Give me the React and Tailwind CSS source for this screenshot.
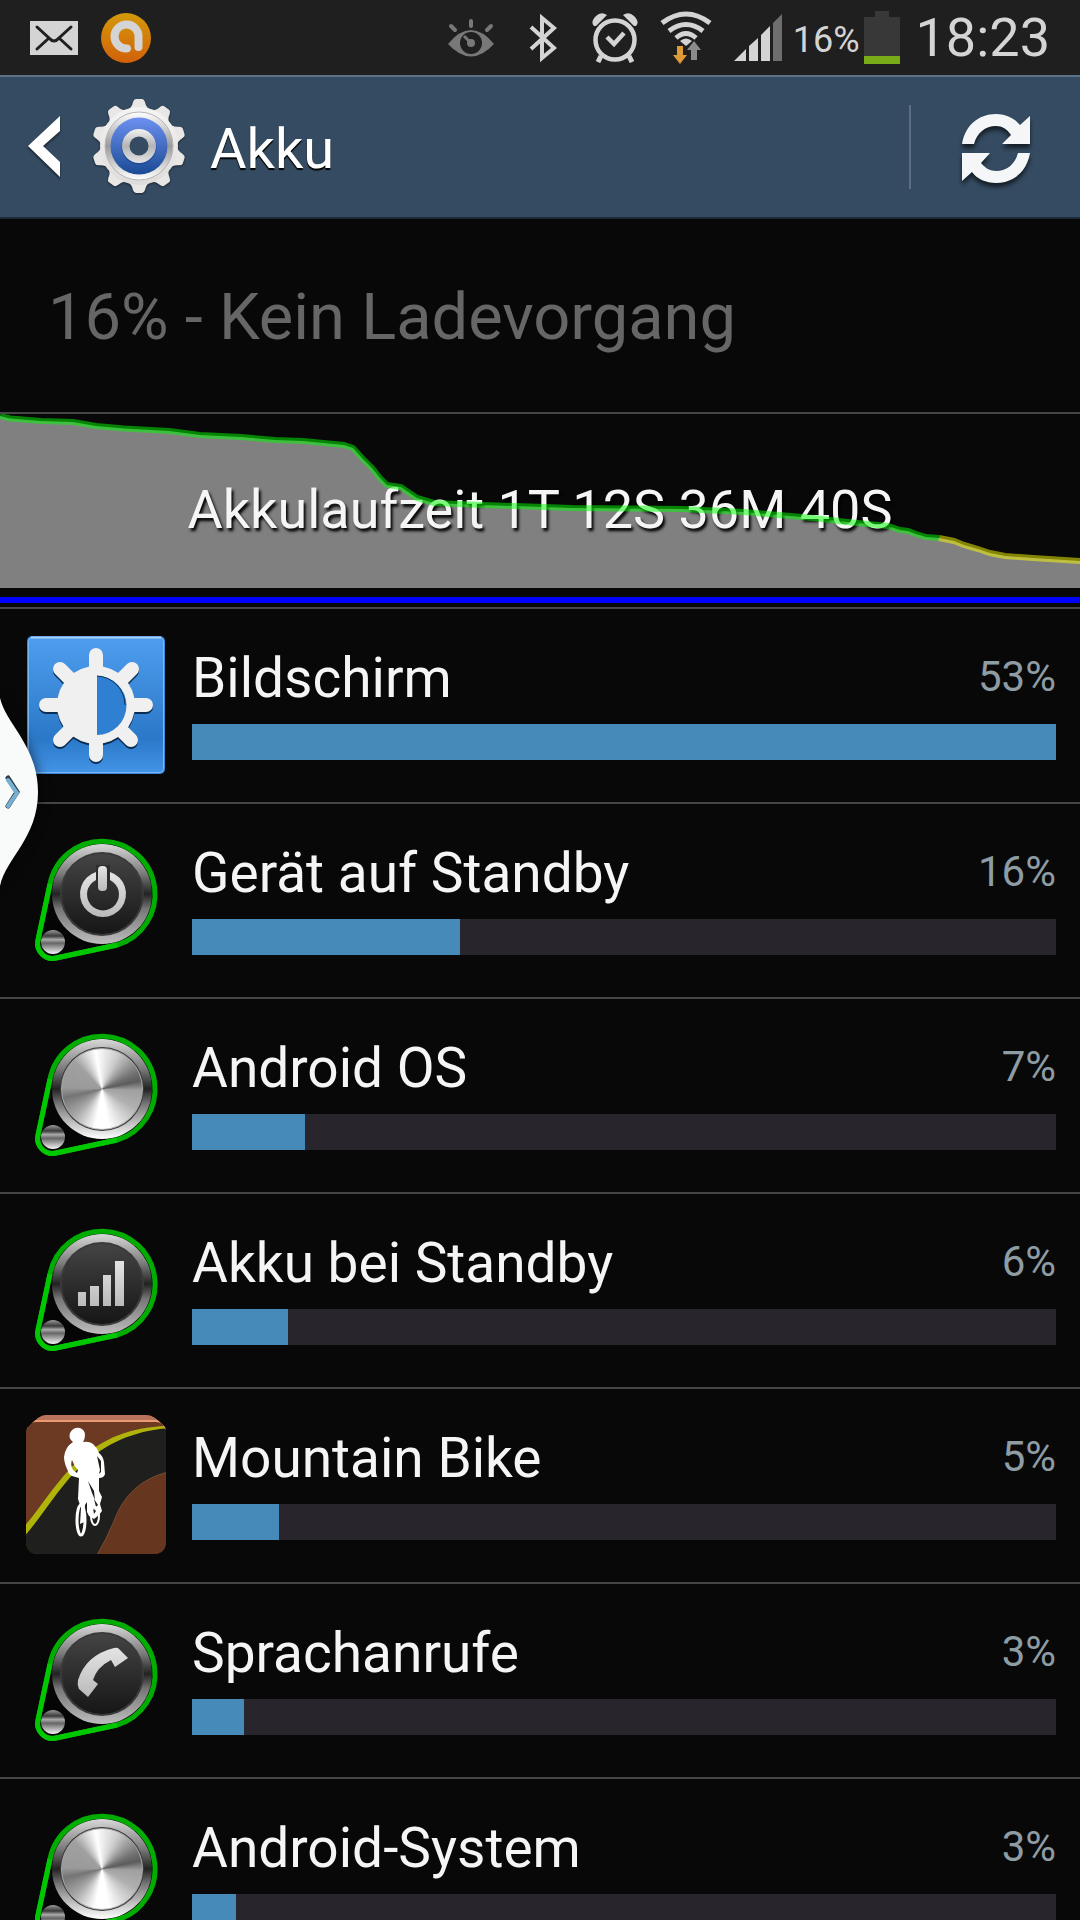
import { useId } from 'react';

const consumers = [
    { name: 'Bildschirm', percent: 53, fill: 864, icon: 'display' },
    { name: 'Gerät auf Standby', percent: 16, fill: 268, icon: 'power' },
    { name: 'Android OS', percent: 7, fill: 113, icon: 'metal' },
    { name: 'Akku bei Standby', percent: 6, fill: 96, icon: 'signal' },
    { name: 'Mountain Bike', percent: 5, fill: 87, icon: 'bike' },
    { name: 'Sprachanrufe', percent: 3, fill: 52, icon: 'phone' },
    { name: 'Android-System', percent: 3, fill: 44, icon: 'metal' },
];

const maxFill = 864;

const greenLine =
    'M0 2 L10 4.5 L41 7 L73 8 L96 12 L124 14.5 L169 17 L200 21 L241 23 L275 26 L303 27 L344 31 L353 34 L362 44 L372 54 L380 64 L387 71 L401 73 L417 84 L434 89 L482 91 L572 94 L682 95 L744 98 L813 104 L847 108 L888 112 L900 116 L908 117 L916 120 L926 123 L939 124';
const yellowLine =
    'M939 124 L954 127 L964 131 L978 135 L990 139 L1005 142 L1033 144 L1080 147';
const chartArea = `${greenLine} L954 127 L964 131 L978 135 L990 139 L1005 142 L1033 144 L1080 147 V174 H0 Z`;

function MailIcon() {
    return (
        <svg viewBox="0 0 48 34" className="h-[34px] w-12">
            <rect width="48" height="34" fill="#d4d4d4" />
            <path
                d="M7 6 L19 17 Q24 23 29 17 L41 6 M7 28 L19 17 M41 28 L29 17"
                fill="none"
                stroke="#1f1f1f"
                strokeWidth="3"
                strokeLinecap="round"
            />
        </svg>
    );
}

function AvastIcon() {
    return (
        <svg viewBox="0 0 50 50" className="size-[50px]">
            <defs>
                <linearGradient id="avast" x1="0" y1="0" x2="0" y2="1">
                    <stop offset="0" stopColor="#d49a0a" />
                    <stop offset="1" stopColor="#d2600a" />
                </linearGradient>
            </defs>
            <circle cx="25" cy="25" r="25" fill="url(#avast)" />
            <path
                d="M26 35.500 A12 12 0 1 1 37.500 24 V34"
                fill="none"
                stroke="#d4d4d4"
                strokeWidth="8"
                strokeLinecap="round"
            />
        </svg>
    );
}

function EyeIcon() {
    return (
        <svg viewBox="0 0 46 38" className="h-[38px] w-[46px]">
            <path d="M0 25 Q23 -3 46 25 Q23 50 0 25 Z" fill="#787878" />
            <circle cx="23" cy="24" r="11" fill="#1f1f1f" />
            <circle cx="23" cy="24" r="4" fill="#787878" />
            <path d="M16 17 L22 23" stroke="#787878" strokeWidth="3" />
            <path
                d="M23 2 V7 M3 7 L7 11 M43 7 L39 11"
                stroke="#787878"
                strokeWidth="4"
                strokeLinecap="round"
            />
        </svg>
    );
}

function BluetoothIcon() {
    return (
        <svg viewBox="0 0 28 48" className="h-12 w-7">
            <path
                d="M2 13 L25 34 L13 44 V4 L25 14 L2 35"
                fill="none"
                stroke="#d4d4d4"
                strokeWidth="4"
            />
        </svg>
    );
}

function AlarmIcon() {
    return (
        <svg viewBox="0 0 46 50" className="h-[50px] w-[46px]">
            <g fill="none" stroke="#d4d4d4">
                <circle cx="23" cy="27" r="19.500" strokeWidth="4.500" />
                <path d="M15 24 L22 31 L32 20" strokeWidth="4.500" />
                <path d="M9 43 L6 49 M37 43 L40 49" strokeWidth="5" />
            </g>
            <path
                d="M2 13 Q-2 9 4 3 Q9 -2 15 2 L4 13 Z M44 13 Q48 9 42 3 Q37 -2 31 2 L42 13 Z"
                fill="#d4d4d4"
            />
        </svg>
    );
}

function WifiIcon() {
    return (
        <svg viewBox="0 0 52 54" className="h-[54px] w-[52px]">
            <g fill="none" stroke="#d4d4d4" strokeWidth="5">
                <path d="M2 12 Q26 -6 50 12" />
                <path d="M9 20 Q26 7 43 20" />
                <path d="M16 27 Q26 18 36 27" />
            </g>
            <path d="M20 30 Q26 25 32 30 L26 35 Z" fill="#d4d4d4" />
            <path d="M17 35 H23 V44 H27 L20 53 L13 44 H17 Z" fill="#dd9a35" />
            <path d="M31 49 H37 V39 H41 L34 30 L27 39 H31 Z" fill="#8b8b8b" />
        </svg>
    );
}

function CellIcon() {
    return (
        <svg viewBox="0 0 48 47" className="h-[47px] w-12">
            <path
                d="M0 47 L12 35 V47 Z M15 47 V32 L24 24 V47 Z M27 47 V21 L36 12 V47 Z"
                fill="#d4d4d4"
            />
            <path d="M39 47 V9 L48 0 V47 Z" fill="#6e6e6e" />
        </svg>
    );
}

function BatteryIcon() {
    return (
        <svg viewBox="0 0 36 53" className="h-[53px] w-9">
            <path d="M11 0 H25 V6 H36 V53 H0 V6 H11 Z" fill="#383838" />
            <rect y="45" width="36" height="8" fill="#78ab18" />
        </svg>
    );
}

function StatusBar() {
    return (
        <div className="flex h-[75px] shrink-0 items-center justify-between bg-[#1f1f1f] px-[30px] text-[#d4d4d4]">
            <div className="flex items-center gap-[23px]">
                <MailIcon />
                <AvastIcon />
            </div>
            <div className="flex items-center">
                <div className="flex items-center gap-[35px] pr-[22px]">
                    <EyeIcon />
                    <BluetoothIcon />
                    <AlarmIcon />
                </div>
                <div className="flex items-center gap-[22px] pr-[11px]">
                    <WifiIcon />
                    <CellIcon />
                </div>
                <span className="pt-1 pr-1 text-[36px] leading-none">16%</span>
                <BatteryIcon />
                <span className="pl-4 text-[54px] leading-none">18:23</span>
            </div>
        </div>
    );
}

const teeth = [0, 36, 72, 108, 144, 180, 216, 252, 288, 324];

function GearIcon() {
    return (
        <svg viewBox="0 0 94 96" className="h-24 w-[94px]">
            <defs>
                <linearGradient id="gearBody" x1="0" y1="0" x2="0" y2="1">
                    <stop offset="0" stopColor="#f4f4f4" />
                    <stop offset="1" stopColor="#dedcda" />
                </linearGradient>
                <linearGradient id="gearRing" x1="0" y1="0" x2="0" y2="1">
                    <stop offset="0" stopColor="#ffffff" />
                    <stop offset="0.5" stopColor="#9a9a9c" />
                    <stop offset="1" stopColor="#ffffff" />
                </linearGradient>
                <linearGradient id="gearHub" x1="0" y1="0" x2="0" y2="1">
                    <stop offset="0" stopColor="#f2f2f2" />
                    <stop offset="0.5" stopColor="#b4b4b6" />
                    <stop offset="1" stopColor="#e4e4e6" />
                </linearGradient>
                <linearGradient id="gearBlue" x1="0" y1="0" x2="0" y2="1">
                    <stop offset="0" stopColor="#6d90f0" />
                    <stop offset="1" stopColor="#1a4a94" />
                </linearGradient>
            </defs>
            <g fill="#e8e7e6" className="drop-shadow-[0_1px_1px_rgba(0,0,0,0.5)]">
                {teeth.map((angle) => (
                    <path
                        key={angle}
                        d="M34 12 Q40 9 41 3 Q42 0 44 0 H50 Q52 0 53 3 Q54 9 60 12 Z"
                        transform={`rotate(${angle} 47 47)`}
                    />
                ))}
                <circle cx="47" cy="47" r="39" fill="url(#gearBody)" />
            </g>
            <circle cx="47" cy="47" r="34" fill="url(#gearRing)" stroke="#b5b5b5" />
            <circle cx="47" cy="47" r="28.500" fill="url(#gearBlue)" />
            <circle cx="47" cy="48" r="17.500" fill="#173f80" opacity="0.5" />
            <circle cx="47" cy="47" r="17" fill="url(#gearHub)" />
            <circle cx="47" cy="47" r="9.500" fill="#344b61" />
        </svg>
    );
}

function RefreshIcon() {
    return (
        <svg
            viewBox="0 0 68 70"
            className="h-[70px] w-[68px] drop-shadow-[0_4px_2px_rgba(0,0,0,0.6)]"
        >
            <path
                d="M0 30 C3 12 16 0 34 0 C44 0 52 4 58 11 L68 2 V30 H40 L49 21 C45 15 40 12 34 12 C23 12 15 19 12 30 Z"
                fill="#f4f6f8"
            />
            <path
                d="M68 39 C65 57 52 69 34 69 C24 69 15 65 10 58 L0 67 V39 H28 L19 49 C23 54 28 57 34 57 C45 57 53 50 56 39 Z"
                fill="#f4f6f8"
            />
        </svg>
    );
}

function ActionBar() {
    return (
        <header className="flex h-36 shrink-0 items-center border-t-2 border-b-2 border-t-[#5d7388] border-b-[#1b2a38] bg-[#344b61]">
            <button type="button" aria-label="Zurück" className="flex items-center gap-8 pl-7">
                <svg
                    viewBox="0 0 32 62"
                    className="h-[62px] w-8 drop-shadow-[0_2px_1px_rgba(0,0,0,0.5)]"
                >
                    <path d="M32 0 V15 L15 30 L32 46 V61 L0 30 Z" fill="#fff" />
                </svg>
                <GearIcon />
            </button>
            <h1 className="flex-1 pt-1 pl-6 text-[56px] leading-none text-white [text-shadow:0_2px_1px_#000]">
                Akku
            </h1>
            <div className="h-[84px] w-[2px] bg-[#5a6f83]" />
            <button type="button" aria-label="Aktualisieren" className="pt-1 pr-[50px] pl-[51px]">
                <RefreshIcon />
            </button>
        </header>
    );
}

function BatteryChart() {
    return (
        <section className="relative border-y-2 border-[#464646]">
            <svg
                viewBox="0 0 1080 174"
                preserveAspectRatio="none"
                className="block h-[174px] w-full"
            >
                <path d={chartArea} fill="#808080" />
            </svg>
            <p className="absolute inset-x-0 top-16 text-center text-[54px] leading-[64px] text-[#f5f5f5] [text-shadow:2px_3px_3px_#000]">
                Akkulaufzeit 1T 12S 36M 40S
            </p>
            <svg
                viewBox="0 0 1080 174"
                preserveAspectRatio="none"
                className="absolute inset-x-0 top-0 h-[174px] w-full"
                fill="none"
                strokeWidth="6"
                opacity="0.5"
            >
                <path d={greenLine} stroke="#00ff00" />
                <path d={yellowLine} stroke="#ffff00" />
            </svg>
            <div className="mt-[9px] mb-1 h-[6px] bg-[#0000ff]" />
        </section>
    );
}

function DisplayIcon() {
    return (
        <svg viewBox="0 0 144 144" className="size-36">
            <defs>
                <linearGradient id="tile" x1="0" y1="0" x2="0" y2="1">
                    <stop offset="0" stopColor="#4f9dee" />
                    <stop offset="0.75" stopColor="#2b78c8" />
                    <stop offset="1" stopColor="#4294e6" />
                </linearGradient>
            </defs>
            <rect x="3" y="3" width="138" height="138" rx="5" fill="#3b88da" />
            <rect x="4.500" y="4.500" width="135" height="135" rx="4" fill="url(#tile)" stroke="#7ab6f2" />
            <path d="M7 4.500 H137" stroke="#a9d0f7" strokeWidth="2" />
            <g className="drop-shadow-[0_2px_0_rgba(5,35,70,0.9)]">
                <g stroke="#f0f0f0" strokeWidth="14" strokeLinecap="round">
                    <path d="M72 22 V122 M22 72 H122 M36 36 L46 46 M108 36 L98 46 M36 107 L46 97 M107 107 L97 97" />
                </g>
                <circle cx="72" cy="72" r="39" fill="#f0f0f0" />
            </g>
            <path d="M73 43 A29 29 0 0 1 73 102 Z" fill="#2f7fd2" />
            <path d="M73 43 A29 29 0 0 1 101 72" fill="none" stroke="#0c2f57" strokeWidth="1" />
        </svg>
    );
}

function BeltIcon({ children, metal }) {
    const id = useId();

    return (
        <div className="relative size-36">
            <svg viewBox="0 -3 144 144" className="size-36">
                <defs>
                    <linearGradient id={`${id}rim`} x1="0" y1="0" x2="0" y2="1">
                        <stop offset="0" stopColor="#d8d8d8" />
                        <stop offset="0.3" stopColor="#7a7a7a" />
                        <stop offset="0.5" stopColor="#222" />
                        <stop offset="0.65" stopColor="#777" />
                        <stop offset="1" stopColor={metal ? '#ffffff' : '#bdbdbd'} />
                    </linearGradient>
                    <linearGradient id={`${id}face`} x1="0" y1="0" x2="0" y2="1">
                        <stop offset="0" stopColor="#444" />
                        <stop offset="1" stopColor="#161616" />
                    </linearGradient>
                    <linearGradient id={`${id}knob`} x1="0" y1="0" x2="0" y2="1">
                        <stop offset="0" stopColor="#999" />
                        <stop offset="0.25" stopColor="#3a3a3a" />
                        <stop offset="0.4" stopColor="#aaa" />
                        <stop offset="0.55" stopColor="#666" />
                        <stop offset="1" stopColor="#f5f5f5" />
                    </linearGradient>
                    <linearGradient id={`${id}glyph`} x1="0" y1="0" x2="0" y2="1">
                        <stop offset="0" stopColor="#e4e4e4" />
                        <stop offset="1" stopColor="#bababa" />
                    </linearGradient>
                </defs>
                <path
                    d="M27 60 A52 52 0 1 1 90 112 L33 124 A15 15 0 0 1 14 106 Z"
                    fill="#050505"
                />
                <circle cx="78" cy="63" r="50" fill={`url(#${id}rim)`} />
                <circle cx="78" cy="63" r="42" fill="#3a3a3a" />
                <circle cx="78" cy="63" r="40" fill={`url(#${id}face)`} />
                <circle cx="29" cy="111" r="12" fill={`url(#${id}knob)`} />
                <path
                    d="M26 53 A53 53 0 1 1 93 114 L32 127 A15 15 0 0 1 14 109 Z"
                    fill="none"
                    stroke="#00ad00"
                    strokeWidth="5"
                />
                <path
                    d="M26 53 L14 109 A15 15 0 0 0 32 127 L93 114"
                    fill="none"
                    stroke="#00c800"
                    strokeWidth="5"
                />
                <g fill={`url(#${id}glyph)`}>{children}</g>
            </svg>
            {metal && (
                <div className="absolute top-[25px] left-[37px] size-[82px] rounded-full border border-[#aaaaaa] bg-[conic-gradient(#f0f0f0_0deg,#cccccc_25deg,#707070_65deg,#5c5c5c_78deg,#a0a0a0_92deg,#b0b0b0_120deg,#ffffff_170deg,#ffffff_190deg,#aaaaaa_225deg,#747474_257deg,#9a9a9a_272deg,#a0a0a0_315deg,#ffffff_350deg,#f0f0f0_360deg)]" />
            )}
        </div>
    );
}

function BikeIcon() {
    return (
        <svg viewBox="0 0 144 144" className="size-36">
            <defs>
                <clipPath id="bikeTile">
                    <path d="M2 18 Q3 14 8 10 L14 5 Q18 2 22 2 H122 Q127 2 131 5 L137 10 Q142 14 142 18 V128 Q142 141 129 141 H15 Q2 141 2 128 Z" />
                </clipPath>
            </defs>
            <g clipPath="url(#bikeTile)">
                <rect width="144" height="144" fill="#6c3a22" />
                <path d="M0 122 L35 76 Q76 18 144 15 V60 Q112 68 98 97 Q86 122 73 142 H0 Z" fill="#1f1f1e" />
                <path d="M0 114 C20 90 34 66 54 48 C80 24 108 14 144 13 V15 C110 18 82 30 58 52 C38 70 22 98 0 124 Z" fill="#b0b40a" />
                <path d="M73 142 Q82 127 90 108 Q104 69 144 59 V144 H72 Z" fill="#66361f" stroke="#7a4a34" />
                <path d="M0 0 H144 V16 Q140 8 132 8 H12 Q4 8 2 16 Z" fill="#b8735a" />
                <path d="M2 16 Q4 8 12 8 H132 Q140 8 142 16" fill="none" stroke="#eb9a76" strokeWidth="2" />
            </g>
            <path
                fill="#fff"
                fillRule="evenodd"
                d="M49 29 Q44 25 46 20 Q49 14 56 15 Q61 17 61 22 Q61 26 59 29 Q66 28 70 32 Q74 36 75 40 Q79 43 80 49 L81 61 Q80 65 75 65 L75 78 L78 84 L76 91 L78 98 L75 102 L70 106 L65 103 L63 99 L63 89 L61 92 L60 109 L56 111 L57 95 L54 86 L55 65 L48 63 Q45 62 44 58 Q40 50 40 44 Q41 34 49 29 Z M48 47 Q46 51 49 57 L53 60 L54 57 Q50 53 48 47 Z M73 43 L76 57 L75 61 L77 59 L77 48 Z M64 68 L68 80 L71 87 L70 78 Z M70 86 L72 94 L74 92 Z M69 95 L70 101 L72 98 Z"
            />
            <g fill="none" stroke="#fff">
                <ellipse cx="57" cy="107" rx="4" ry="15" strokeWidth="3" />
                <ellipse cx="71" cy="103" rx="4" ry="9" strokeWidth="2" />
            </g>
        </svg>
    );
}

function ConsumerIcon({ type }) {
    if (type === 'display') {
        return <DisplayIcon />;
    }
    if (type === 'bike') {
        return <BikeIcon />;
    }
    if (type === 'metal') {
        return <BeltIcon metal />;
    }
    if (type === 'power') {
        return (
            <BeltIcon>
                <path d="M72 41 V49 A16 16 0 1 0 86 49 V41 A23 23 0 1 1 72 41 Z" />
                <rect x="72" y="34" width="14" height="28" fill="#2e2e2e" />
                <rect x="74" y="35" width="9" height="25" rx="4" />
            </BeltIcon>
        );
    }
    if (type === 'signal') {
        return (
            <BeltIcon>
                <path d="M54 71 H62 V85 H54 Z M66 65 H75 V85 H66 Z M79 54 H87 V85 H79 Z M91 40 H100 V85 H91 Z" />
            </BeltIcon>
        );
    }
    return (
        <BeltIcon>
            <path d="M90 37 Q94 36 96 39 L104 47 L91 56 L87 49 Q73 56 69 69 L74 73 L64 86 L55 78 Q53 74 54 69 Q62 44 90 37 Z" />
        </BeltIcon>
    );
}

function ConsumerRow({ item }) {
    return (
        <li className="flex h-[195px] gap-6 border-b-2 border-[#464646] px-6 pt-6">
            <ConsumerIcon type={item.icon} />
            <div className="flex-1 pt-[13px]">
                <div className="flex h-[78px] items-start justify-between">
                    <span className="text-[55px] leading-[64px] text-[#f5f5f5]">
                        {item.name}
                    </span>
                    <span className="text-[42px] leading-[62px] text-[#8e9ca4]">
                        {item.percent}%
                    </span>
                </div>
                <div className="h-9 bg-[#28252c]">
                    <div
                        className="h-full bg-[#458ab8]"
                        style={{ width: `${(item.fill / maxFill) * 100}%` }}
                    />
                </div>
            </div>
        </li>
    );
}

export default function App() {
    return (
        <div className="relative flex h-screen flex-col overflow-hidden bg-[#080808] font-['Roboto',sans-serif]">
            <StatusBar />
            <ActionBar />
            <main className="min-h-0 flex-1 overflow-hidden">
                <p className="px-12 pt-[60px] pb-14 text-[65px] leading-[77px] text-[#666666]">
                    16% - Kein Ladevorgang
                </p>
                <BatteryChart />
                <ul>
                    {consumers.map((item) => (
                        <ConsumerRow key={item.name} item={item} />
                    ))}
                </ul>
            </main>
            <button
                type="button"
                aria-label="Multi-Window öffnen"
                className="absolute top-[690px] left-0"
            >
                <svg
                    viewBox="0 0 44 200"
                    className="h-[200px] w-11 drop-shadow-[2px_0_6px_rgba(0,0,0,0.5)]"
                >
                    <path
                        d="M0 8 C6 34 38 56 38 102 C38 148 6 168 0 196 Z"
                        fill="#f9fbfa"
                    />
                    <path
                        d="M8 88 L17 102 L8 116"
                        fill="none"
                        stroke="#2d3d48"
                        strokeWidth="5"
                        strokeLinecap="round"
                    />
                    <path
                        d="M8 90 L17 103 L8 116"
                        fill="none"
                        stroke="#76afcf"
                        strokeWidth="4"
                        strokeLinecap="round"
                    />
                </svg>
            </button>
        </div>
    );
}
